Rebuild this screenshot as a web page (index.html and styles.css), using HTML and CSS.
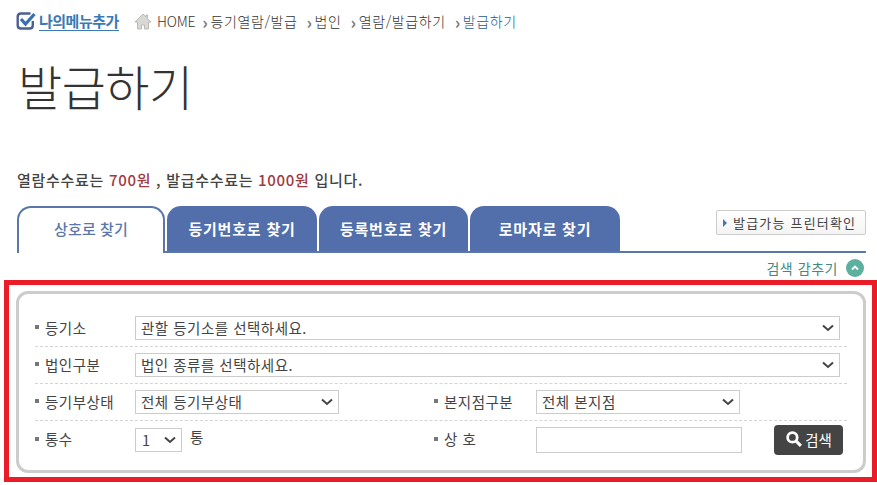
FILE: index.html
```html
<!DOCTYPE html>
<html lang="ko">
<head>
<meta charset="utf-8">
<title>발급하기</title>
<link rel="stylesheet" href="styles.css">
</head>
<body>
<div class="page">
  <div class="topbar">
    <a class="mymenu">
      <svg class="check" width="20" height="20" viewBox="0 0 20 20"><path d="M14.500 2.500H5Q1.700 2.500 1.700 5.800v8.400q0 3.300 3.300 3.300h8.500q3.300 0 3.300-3.300V10" fill="none" stroke="#4a5f94" stroke-width="2.400"/><path d="M5 8l4.500 5L18.500 3" fill="none" stroke="#3b6fb0" stroke-width="3.200"/></svg>
      <span class="mymenu-text">나의메뉴추가</span>
    </a>
    <nav class="crumbs">
      <svg class="home" width="18" height="17" viewBox="0 0 18 17"><path d="M9 1L1 9h2.500v7h4v-4h3v4h4V9H17L13.500 5.500V2H12v2z" fill="#d8d8d4" stroke="#b0b0aa" stroke-width=".8"/></svg>
      <span class="crumb c-home">HOME</span>
      <span class="sep">›</span><span class="crumb">등기열람/발급</span>
      <span class="sep s2">›</span><span class="crumb">법인</span>
      <span class="sep s2">›</span><span class="crumb">열람/발급하기</span>
      <span class="sep s2">›</span><span class="crumb current">발급하기</span>
    </nav>
  </div>

  <h1 class="title">발급하기</h1>

  <p class="fee">열람수수료는 <em>700원</em> , 발급수수료는 <em>1000원</em> 입니다.</p>

  <div class="tabbar">
    <a class="tab active">상호로 찾기</a>
    <a class="tab">등기번호로 찾기</a>
    <a class="tab t3">등록번호로 찾기</a>
    <a class="tab">로마자로 찾기</a>
    <a class="printer"><i class="tri"></i>발급가능 프린터확인</a>
  </div>

  <div class="toggle-row">
    <span class="toggle-text">검색 감추기</span>
    <svg width="18" height="18" viewBox="0 0 18 18"><circle cx="9" cy="9" r="9" fill="#5bb0a0"/><path d="M6 10.500L9 7.500l3 3" fill="none" stroke="#fff" stroke-width="1.800"/></svg>
  </div>
</div>

<section class="redbox">
  <form class="panel">
    <div class="row">
      <label class="lbl">등기소</label>
      <select class="sel sel-full"><option>관할 등기소를 선택하세요.</option></select>
    </div>
    <div class="row">
      <label class="lbl">법인구분</label>
      <select class="sel sel-full"><option>법인 종류를 선택하세요.</option></select>
    </div>
    <div class="row">
      <label class="lbl">등기부상태</label>
      <select class="sel sel-mid"><option>전체 등기부상태</option></select>
      <label class="lbl lbl-right">본지점구분</label>
      <select class="sel sel-mid"><option>전체 본지점</option></select>
    </div>
    <div class="row last">
      <label class="lbl">통수</label>
      <span class="num-cell">
        <select class="sel sel-num"><option>1</option></select>
        <span class="unit">통</span>
      </span>
      <label class="lbl lbl-right">상 호</label>
      <input class="txt" type="text">
      <button class="btn" type="button">
        <svg width="18" height="18" viewBox="0 0 17 17"><circle cx="7" cy="7" r="4.500" fill="none" stroke="#fff" stroke-width="2.600"/><path d="M10.500 10.500L15 15" stroke="#fff" stroke-width="3"/></svg>
        검색
      </button>
    </div>
  </form>
</section>
</body>
</html>
```
FILE: styles.css
```css
* { box-sizing: border-box; }
html, body { margin: 0; padding: 0; background: #fff; }
body {
  width: 877px;
  height: 485px;
  overflow: hidden;
  font-family: "Noto Sans CJK KR", "Noto Sans", sans-serif;
  color: #333;
  font-size: 14px;
}
.page { padding: 0 11px 0 17px; }

.topbar { display: flex; align-items: center; height: 42px; }
.mymenu { display: flex; flex: none; align-items: center; width: 117px; }
.check { margin-left: -1px; margin-right: 3px; flex: none; }
.mymenu-text {
  font-size: 15px;
  font-weight: 700;
  color: #3a79b5;
  letter-spacing: -.5px;
  line-height: 18px;
  border-bottom: 1px solid #3a79b5;
  white-space: nowrap;
}
.crumbs { display: flex; align-items: center; font-size: 14px; color: #333; white-space: nowrap; letter-spacing: .6px; font-weight: 300; }
.c-home { letter-spacing: -.2px; }
.home { margin-right: 5px; }
.sep { color: #777; font-size: 17px; line-height: 17px; margin: 0 2px 0 7px; font-weight: 700; }
.sep.s2 { margin-left: 9px; }
.current { color: #1f5a90; }

.title {
  margin: 14px 0 0 1px;
  font-size: 48px;
  font-weight: 300;
  line-height: 58px;
  color: #333;
  letter-spacing: -.5px;
}
.fee {
  margin: 56px 0 0;
  font-size: 15px;
  line-height: 20px;
  letter-spacing: .7px;
  color: #444;
  font-weight: 500;
}
.fee em { font-style: normal; color: #a23a3e; }

.tabbar {
  display: flex;
  align-items: flex-start;
  gap: 2px;
  height: 47px;
  margin-top: 16px;
  border-bottom: 2px solid #5a76ab;
}
.tab {
  width: 150px;
  height: 45px;
  border-radius: 14px 14px 0 0;
  background: #526fab;
  color: #fff;
  font-weight: 700;
  font-size: 15px;
  letter-spacing: .8px;
  line-height: 45px;
  text-align: center;
  white-space: nowrap;
}
.tab.t3 { width: 149px; }
.tab.active {
  width: 148px;
  height: 47px;
  background: #fff;
  color: #5a76ab;
  font-weight: 500;
  letter-spacing: .1px;
  border: 2px solid #5a76ab;
  border-bottom: 0;
  line-height: 41px;
}
.printer {
  display: flex;
  align-items: center;
  margin-left: auto;
  margin-top: 4px;
  width: 150px;
  height: 25px;
  padding-left: 6px;
  border: 1px solid #ccc;
  border-radius: 2px;
  background: linear-gradient(#fff, #f4f4f4);
  font-size: 13px;
  letter-spacing: 1.200px;
  color: #444;
  white-space: nowrap;
}
.tri {
  width: 0;
  height: 0;
  margin-right: 6px;
  border-left: 4px solid #3f78b5;
  border-top: 4px solid transparent;
  border-bottom: 4px solid transparent;
}

.toggle-row {
  display: flex;
  justify-content: flex-end;
  align-items: center;
  gap: 8px;
  height: 27px;
  padding: 2px 2px 0 0;
  color: #3f8a80;
  font-size: 14px;
  letter-spacing: .55px;
}
.toggle-row svg { flex: none; }

.redbox {
  width: 873px;
  height: 202px;
  margin-left: 4px;
  padding: 6px 0 0 7px;
  border: 5px solid #e91c28;
  background: #fff;
}
.panel {
  width: 850px;
  height: 182px;
  padding: 16px 16px 0;
  border: 3px solid #ccc;
  border-radius: 12px;
}
.row {
  display: flex;
  align-items: center;
  height: 37px;
  border-bottom: 1px dashed #d4d4d4;
  font-size: 14.500px;
  letter-spacing: .5px;
  color: #444;
}
.row.last { border-bottom: 0; }
.lbl {
  display: flex;
  align-items: center;
  flex: none;
  width: 100px;
  padding-bottom: 2px;
  white-space: nowrap;
}
.lbl::before {
  content: "";
  width: 4px;
  height: 4px;
  margin-right: 6px;
  background: #777;
}
.lbl-right { margin-left: 95px; width: 102px; }
.sel {
  appearance: none;
  -webkit-appearance: none;
  height: 24px;
  padding: 0 0 2px 5px;
  border: 1px solid #ccc;
  border-radius: 0;
  background: #fff url("data:image/svg+xml,%3Csvg xmlns='http://www.w3.org/2000/svg' width='12' height='8'%3E%3Cpath d='M1 1.500l5 4.500 5-4.500' fill='none' stroke='%23444' stroke-width='2'/%3E%3C/svg%3E") no-repeat right 5px center;
  font: inherit;
  letter-spacing: inherit;
  color: #444;
}
.sel-full { width: 705px; }
.sel-mid { width: 204px; }
.num-cell { display: flex; align-items: center; width: 204px; flex: none; }
.sel-num { width: 47px; padding-left: 6px; }
.unit { margin-left: 8px; position: relative; top: -3px; }
.txt { width: 206px; height: 26px; border: 1px solid #ccc; background: #fff; flex: none; }
.btn {
  display: flex;
  align-items: center;
  justify-content: center;
  gap: 2px;
  width: 69px;
  height: 30px;
  margin-left: 32px;
  padding: 0 0 1px;
  border: 0;
  border-radius: 4px;
  background: #444;
  color: #fff;
  font: inherit;
  flex: none;
}
```
